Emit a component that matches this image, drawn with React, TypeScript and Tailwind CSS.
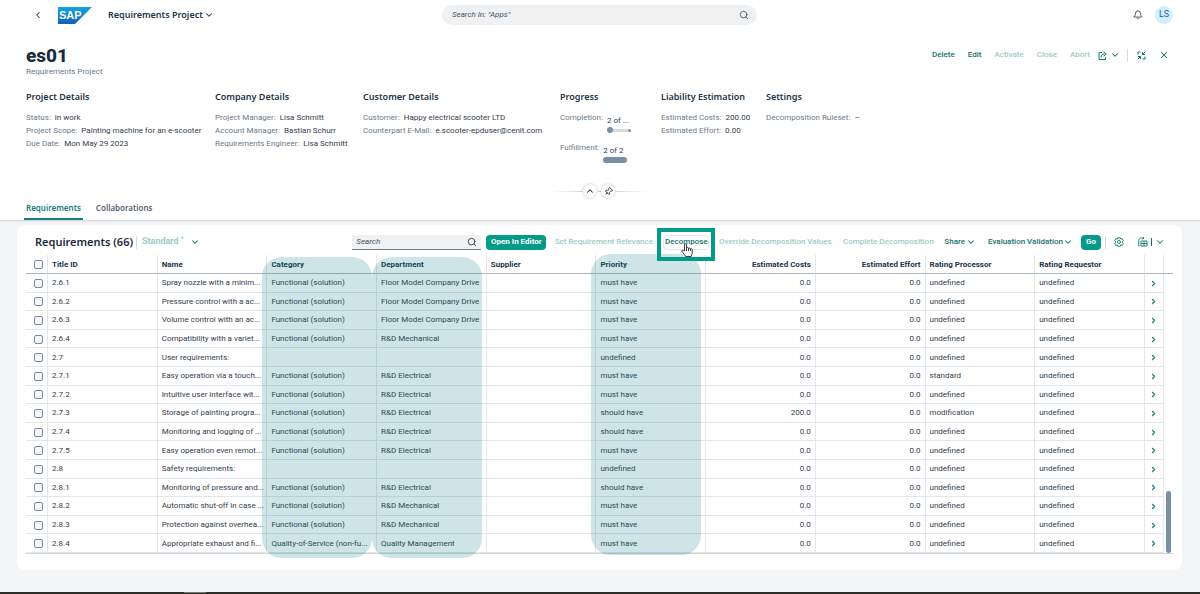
import type { ReactNode } from "react";
import { Bell, ChevronDown, ChevronLeft, ChevronRight, ChevronUp, Pin, Search, X } from "lucide-react";

type Requirement = {
  id: string;
  name: string;
  category?: string;
  department?: string;
  priority: string;
  costs?: string;
  processor?: string;
};

const FUNCTIONAL = "Functional (solution)";

const requirements: Requirement[] = [
  { id: "2.6.1", name: "Spray nozzle with a minim...", category: FUNCTIONAL, department: "Floor Model Company Drive", priority: "must have" },
  { id: "2.6.2", name: "Pressure control with a ac...", category: FUNCTIONAL, department: "Floor Model Company Drive", priority: "must have" },
  { id: "2.6.3", name: "Volume control with an ac...", category: FUNCTIONAL, department: "Floor Model Company Drive", priority: "must have" },
  { id: "2.6.4", name: "Compatibility with a variet...", category: FUNCTIONAL, department: "R&D Mechanical", priority: "must have" },
  { id: "2.7", name: "User requirements:", priority: "undefined" },
  { id: "2.7.1", name: "Easy operation via a touch...", category: FUNCTIONAL, department: "R&D Electrical", priority: "must have", processor: "standard" },
  { id: "2.7.2", name: "Intuitive user interface wit...", category: FUNCTIONAL, department: "R&D Electrical", priority: "must have" },
  { id: "2.7.3", name: "Storage of painting progra...", category: FUNCTIONAL, department: "R&D Electrical", priority: "should have", costs: "200.0", processor: "modification" },
  { id: "2.7.4", name: "Monitoring and logging of ...", category: FUNCTIONAL, department: "R&D Electrical", priority: "should have" },
  { id: "2.7.5", name: "Easy operation even remot...", category: FUNCTIONAL, department: "R&D Electrical", priority: "must have" },
  { id: "2.8", name: "Safety requirements:", priority: "undefined" },
  { id: "2.8.1", name: "Monitoring of pressure and...", category: FUNCTIONAL, department: "R&D Electrical", priority: "should have" },
  { id: "2.8.2", name: "Automatic shut-off in case ...", category: FUNCTIONAL, department: "R&D Mechanical", priority: "must have" },
  { id: "2.8.3", name: "Protection against overhea...", category: FUNCTIONAL, department: "R&D Mechanical", priority: "must have" },
  { id: "2.8.4", name: "Appropriate exhaust and fi...", category: "Quality-of-Service (non-fu...", department: "Quality Management", priority: "must have" },
];

function SapLogo() {
  return (
    <svg width="34" height="17" viewBox="0 0 34 17" role="img" aria-label="SAP">
      <defs>
        <linearGradient id="sap" x1="0" y1="0" x2="0" y2="1">
          <stop offset="0" stopColor="#12a5e4" />
          <stop offset="1" stopColor="#1161b5" />
        </linearGradient>
      </defs>
      <path d="M0 0h34L17 17H0z" fill="url(#sap)" />
      <text x="1" y="12" fill="#fff" fontFamily="Liberation Sans, sans-serif" fontWeight="bold" fontSize="11">
        SAP
      </text>
    </svg>
  );
}

function ShareIcon() {
  return (
    <svg width="9" height="9" viewBox="0 0 18 18" fill="none" stroke="currentColor" strokeWidth="2">
      <path d="M8 3H2v14h13v-4" />
      <path d="M6 13c0-5 3-7 7-7M11 1.500l5.500 4.500L11 10.500" />
    </svg>
  );
}

function ExitFullScreenIcon() {
  return (
    <svg width="9" height="9" viewBox="0 0 18 18" fill="none" stroke="currentColor" strokeWidth="2">
      <path d="M2 7V2h5M17 1l-5 5M11 2v5h5M16 11v5h-5M2 11h5v5M7 11l-5 5" />
    </svg>
  );
}

function SettingsIcon() {
  return (
    <svg width="10" height="10" viewBox="0 0 20 20" fill="none" stroke="currentColor" strokeWidth="1.800">
      <path d="M7.500 1.500h5l1 2.500 3-.5 2 4-2 2.500 2 2.500-2 4-3-.5-1 2.500h-5l-1-2.500-3 .5-2-4 2-2.500-2-2.500 2-4 3 .5z" />
      <circle cx="10" cy="10" r="3" />
    </svg>
  );
}

function ExportIcon() {
  return (
    <svg width="10" height="10" viewBox="0 0 20 20" fill="none" stroke="currentColor" strokeWidth="1.800">
      <path d="M3 18H1.500V7C1.500 4 4 2 7 2h5M9 0l3 2-3 2.500" />
      <path d="M6 8h12v10H6zM6 13h12M12 8v10" />
    </svg>
  );
}

function HandCursor() {
  return (
    <svg width="12" height="14" viewBox="0 0 24 28" fill="#fff" stroke="#222b33" strokeWidth="1.800" strokeLinejoin="round">
      <path d="M7 16V3.500a2 2 0 0 1 4 0V11a2 2 0 0 1 4 0v1a2 2 0 0 1 4 0v1a1.800 1.800 0 0 1 3.500 0v7c0 3-2 4-2 7H9c0-3-5-6-7.500-11 0-2 2.500-2.500 4-.5z" />
      <path d="M11 11v5M15 12v4M19 13v3" />
    </svg>
  );
}

function Facet({ title, children }: { title: string; children: ReactNode }) {
  return (
    <section className="whitespace-nowrap">
      <h2 className="mb-2 font-['Noto_Sans',sans-serif] text-[9px] leading-3 font-semibold text-[#223548]">{title}</h2>
      {children}
    </section>
  );
}

function Field({ label, value }: { label: string; value: string }) {
  return (
    <p className="text-[8px] leading-[13px]">
      <span className="text-[#6b7a89]">{label}:</span>
      <span className="ml-1 text-[#33404d]">{value}</span>
    </p>
  );
}

function ShellBar() {
  return (
    <div className="flex h-[30px] items-center pr-[27px] pl-[33px]">
      <button type="button" aria-label="Back" className="text-[#223548]">
        <ChevronLeft size={10} strokeWidth={2.5} />
      </button>
      <a href="#home" className="ml-[15px]">
        <SapLogo />
      </a>
      <button type="button" className="ml-4 flex items-center gap-px font-['Noto_Sans',sans-serif] text-[9px] leading-3 font-semibold text-[#223548]">
        Requirements Project
        <ChevronDown size={10} strokeWidth={2.5} />
      </button>
      <div className="mx-auto flex h-5 w-[315px] items-center rounded-full bg-[#eff1f3] pr-2 pl-2.5">
        <input
          type="text"
          aria-label="Search apps"
          placeholder={'Search In: "Apps"'}
          className="min-w-0 flex-1 bg-transparent text-[8px] italic outline-none placeholder:text-[#46525e]"
        />
        <Search size={10} className="text-[#46525e]" />
      </div>
      <div className="flex w-[188px] items-center justify-end gap-3">
        <button type="button" aria-label="Notifications" className="text-[#223548]">
          <Bell size={10} />
        </button>
        <span className="flex size-[18px] items-center justify-center rounded-full bg-[#d1efff] text-[9px] text-[#2f62a6]">LS</span>
      </div>
    </div>
  );
}

function ObjectHeader() {
  return (
    <header className="relative z-10 bg-white shadow-[0_1px_2px_rgba(34,53,72,0.2)]">
      <ShellBar />
      <div className="flex justify-between pt-4 pr-[31px] pl-[26px]">
        <div>
          <h1 className="text-[19px] leading-5 font-extrabold text-[#1b2a3a]">es01</h1>
          <p className="text-[8px] leading-3 text-[#6b7a89]">Requirements Project</p>
        </div>
        <div className="flex h-[18px] items-center gap-[13px] text-[8px] font-medium text-[#14736b]">
          <button type="button">Delete</button>
          <button type="button">Edit</button>
          <button type="button" disabled className="text-[#9ccbc6]">Activate</button>
          <button type="button" disabled className="text-[#9ccbc6]">Close</button>
          <button type="button" disabled className="text-[#9ccbc6]">Abort</button>
          <button type="button" aria-label="Share" className="-ml-[5px] flex items-center gap-[3px]">
            <ShareIcon />
            <ChevronDown size={10} strokeWidth={2.5} />
          </button>
          <span className="-ml-1.5 h-[13px] w-px bg-[#d5dadf]" />
          <button type="button" aria-label="Exit full screen" className="-ml-1">
            <ExitFullScreenIcon />
          </button>
          <button type="button" aria-label="Close page">
            <X size={10} strokeWidth={2.5} />
          </button>
        </div>
      </div>

      <div className="mt-[13px] grid grid-cols-[189px_148px_197px_101px_105px_1fr] pl-[26px]">
        <Facet title="Project Details">
          <Field label="Status" value="in work" />
          <Field label="Project Scope" value="Painting machine for an e-scooter" />
          <Field label="Due Date" value="Mon May 29 2023" />
        </Facet>
        <Facet title="Company Details">
          <Field label="Project Manager" value="Lisa Schmitt" />
          <Field label="Account Manager" value="Bastian Schurr" />
          <Field label="Requirements Engineer" value="Lisa Schmitt" />
        </Facet>
        <Facet title="Customer Details">
          <Field label="Customer" value="Happy electrical scooter LTD" />
          <Field label="Counterpart E-Mail" value="e.scooter-epduser@cenit.com" />
        </Facet>
        <Facet title="Progress">
          <div className="flex gap-1 text-[8px]">
            <span className="leading-[13px] text-[#6b7a89]">Completion:</span>
            <div className="mt-1 w-6 text-[#33404d]">
              <p className="leading-3">2 of ...</p>
              <div className="flex items-center">
                <span className="size-1.5 rounded-full bg-[#788fa6]" />
                <span className="h-[3px] flex-1 bg-[#d5dadd]" />
                <span className="size-[3px] rounded-full bg-[#788fa6]" />
              </div>
            </div>
          </div>
          <div className="mt-2 flex gap-1 text-[8px]">
            <span className="leading-[13px] text-[#6b7a89]">Fulfillment:</span>
            <div className="mt-1 w-6 text-[#33404d]">
              <p className="leading-3">2 of 2</p>
              <div className="h-1.5 rounded-full bg-[#788fa6]" />
            </div>
          </div>
        </Facet>
        <Facet title="Liability Estimation">
          <Field label="Estimated Costs" value="200.00" />
          <Field label="Estimated Effort" value="0.00" />
        </Facet>
        <Facet title="Settings">
          <Field label="Decomposition Ruleset" value="–" />
        </Facet>
      </div>

      <div className="mt-[21px] flex items-center justify-center pr-0.5 text-[#223548]">
        <span className="h-px w-8 bg-linear-to-r from-transparent to-[#cfd6dc]" />
        <button type="button" aria-label="Collapse header" className="flex size-3.5 items-center justify-center rounded-full shadow-[0_0_2px_rgba(34,53,72,0.4)]">
          <ChevronUp size={10} strokeWidth={2.5} />
        </button>
        <span className="h-px w-1 bg-[#cfd6dc]" />
        <button type="button" aria-label="Pin header" className="flex size-3.5 items-center justify-center rounded-full shadow-[0_0_2px_rgba(34,53,72,0.4)]">
          <Pin size={9} strokeWidth={2.5} className="rotate-45" />
        </button>
        <span className="h-px w-8 bg-linear-to-l from-transparent to-[#cfd6dc]" />
      </div>

      <nav className="flex gap-[11px] pl-6 font-['Noto_Sans',sans-serif] text-[8px] leading-3 font-semibold">
        <a href="#requirements" className="border-b-2 border-[#14807a] px-0.5 py-1 text-[#14807a]">Requirements</a>
        <a href="#collaborations" className="px-0.5 pt-1 text-[#566472]">Collaborations</a>
      </nav>
    </header>
  );
}

function Toolbar() {
  return (
    <div className="flex h-[30px] items-center pt-1 pr-[17px] pl-[18px] text-[8px] font-medium whitespace-nowrap text-[#14736b]">
      <h2 className="w-[101px] font-['Noto_Sans',sans-serif] text-[11px] font-semibold text-[#1b2a3a]">Requirements (66)</h2>
      <button type="button" className="flex h-[13px] items-center border-l border-[#d5dadf] pl-[5px]">
        <span className="text-[9px] font-bold text-[#9ccbc6]">Standard <sup>*</sup></span>
        <ChevronDown size={10} strokeWidth={2.5} className="ml-1.5" />
      </button>
      <div className="ml-auto flex h-[15px] w-[129px] items-center border-b border-[#6b7a89] bg-[#eff1f2] px-1">
        <input
          type="text"
          aria-label="Search requirements"
          placeholder="Search"
          className="min-w-0 flex-1 bg-transparent text-[8px] font-normal italic outline-none placeholder:text-[#46525e]"
        />
        <Search size={10} className="text-[#26323e]" />
      </div>
      <button type="button" className="ml-[5px] h-[15px] w-[60px] rounded bg-[#049a8a] text-center font-bold text-white">Open In Editor</button>
      <button type="button" disabled className="w-[115px] text-[#9ccbc6]">Set Requirement Relevance</button>
      <span className="relative w-[50px] text-center">
        <button type="button" className="h-[15px] w-[46px] rounded border border-[#e3e8eb]">Decompose</button>
        <span className="pointer-events-none absolute -top-[7px] -right-1 -left-1 z-20 h-[33px] border-4 border-[#049a8a]" />
        <span className="pointer-events-none absolute top-2 left-5 z-20">
          <HandCursor />
        </span>
      </span>
      <button type="button" disabled className="w-[128px] text-[#9ccbc6]">Override Decomposition Values</button>
      <button type="button" disabled className="w-[98px] text-[#9ccbc6]">Complete Decomposition</button>
      <button type="button" className="ml-[7px] flex items-center gap-px">
        Share
        <ChevronDown size={10} strokeWidth={2.5} />
      </button>
      <button type="button" className="ml-3 flex items-center">
        Evaluation Validation
        <ChevronDown size={10} strokeWidth={2.5} />
      </button>
      <button type="button" className="ml-2 h-[15px] w-5 rounded bg-[#049a8a] text-center font-bold text-white">Go</button>
      <span className="ml-1 h-[13px] w-px bg-[#d5dadf]" />
      <button type="button" aria-label="Settings" className="ml-2">
        <SettingsIcon />
      </button>
      <button type="button" aria-label="Export" className="ml-3.5">
        <ExportIcon />
      </button>
      <button type="button" aria-label="Export options" className="ml-[3px] flex items-center gap-[3px]">
        <span className="h-2 w-px bg-[#14736b]" />
        <ChevronDown size={10} strokeWidth={2.5} />
      </button>
    </div>
  );
}

function Highlight({ raised = false }: { raised?: boolean }) {
  return (
    <span
      className={`pointer-events-none absolute -left-[5px] z-10 h-[301px] w-[110px] rounded-[20px] bg-[#0c7882]/20 ${raised ? "-top-px" : "top-0.5"}`}
    />
  );
}

const checkbox = "block size-[9px] ml-1 appearance-none rounded-[2px] border border-[#7b8b9b] bg-[#f3f6f9] checked:bg-[#049a8a]";
const head = "relative border-r border-b border-r-[#e3e7ea] border-b-[#a9b8c4] px-1 pt-px text-left font-bold text-[#223548]";
const cell = "border-r border-b border-[#e3e7ea] px-1 pt-px";

function RequirementsTable() {
  return (
    <div className="mx-[9px] flex">
      <div className="min-w-0 flex-1">
        <table className="h-[299px] w-full table-fixed border-separate border-spacing-0 border-b border-[#cfd6dc] text-[8px] leading-[10px] whitespace-nowrap text-[#33404d]">
          <thead>
            <tr className="h-[19px]">
              <th className={`${head} w-[22px]`}>
                <input type="checkbox" aria-label="Select all" className={checkbox} />
              </th>
              <th className={head}>Title ID</th>
              <th className={head}>Name</th>
              <th className={head}>Category<Highlight /></th>
              <th className={head}>Department<Highlight /></th>
              <th className={head}>Supplier</th>
              <th className={head}>Priority<Highlight raised /></th>
              <th className={`${head} text-right`}>Estimated Costs</th>
              <th className={`${head} text-right`}>Estimated Effort</th>
              <th className={head}>Rating Processor</th>
              <th className={head}>Rating Requestor</th>
              <th className={`${head} w-[19px]`} aria-label="Navigation" />
            </tr>
          </thead>
          <tbody>
            {requirements.map((req) => (
              <tr key={req.id}>
                <td className={cell}>
                  <input type="checkbox" aria-label={`Select ${req.id}`} className={checkbox} />
                </td>
                <td className={cell}>{req.id}</td>
                <td className={cell}>{req.name}</td>
                <td className={cell}>{req.category}</td>
                <td className={cell}>{req.department}</td>
                <td className={cell} />
                <td className={cell}>{req.priority}</td>
                <td className={`${cell} text-right`}>{req.costs ?? "0.0"}</td>
                <td className={`${cell} text-right`}>0.0</td>
                <td className={cell}>{req.processor ?? "undefined"}</td>
                <td className={cell}>undefined</td>
                <td className={cell}>
                  <button type="button" aria-label={`Open ${req.id}`} className="block text-[#14807a]">
                    <ChevronRight size={9} strokeWidth={3} />
                  </button>
                </td>
              </tr>
            ))}
          </tbody>
        </table>
      </div>
      <div className="flex w-[9px] flex-col border-b border-[#cfd6dc]">
        <div className="h-[19px] border-b border-[#a9b8c4]" />
        <div className="mx-auto mt-auto h-[62px] w-[5px] rounded-full bg-[#788fa6]" />
      </div>
    </div>
  );
}

export default function App() {
  return (
    <div className="flex min-h-screen flex-col bg-[#f4f5f7] font-['Roboto',sans-serif]">
      <ObjectHeader />
      <main className="mt-[5px] mr-[18px] ml-[17px] rounded-lg bg-white pb-4">
        <Toolbar />
        <RequirementsTable />
      </main>
      <div className="mt-auto h-0.5 bg-[#2b2c28]">
        <div className="ml-[184px] h-px w-[22px] bg-[#77786f]" />
      </div>
    </div>
  );
}
